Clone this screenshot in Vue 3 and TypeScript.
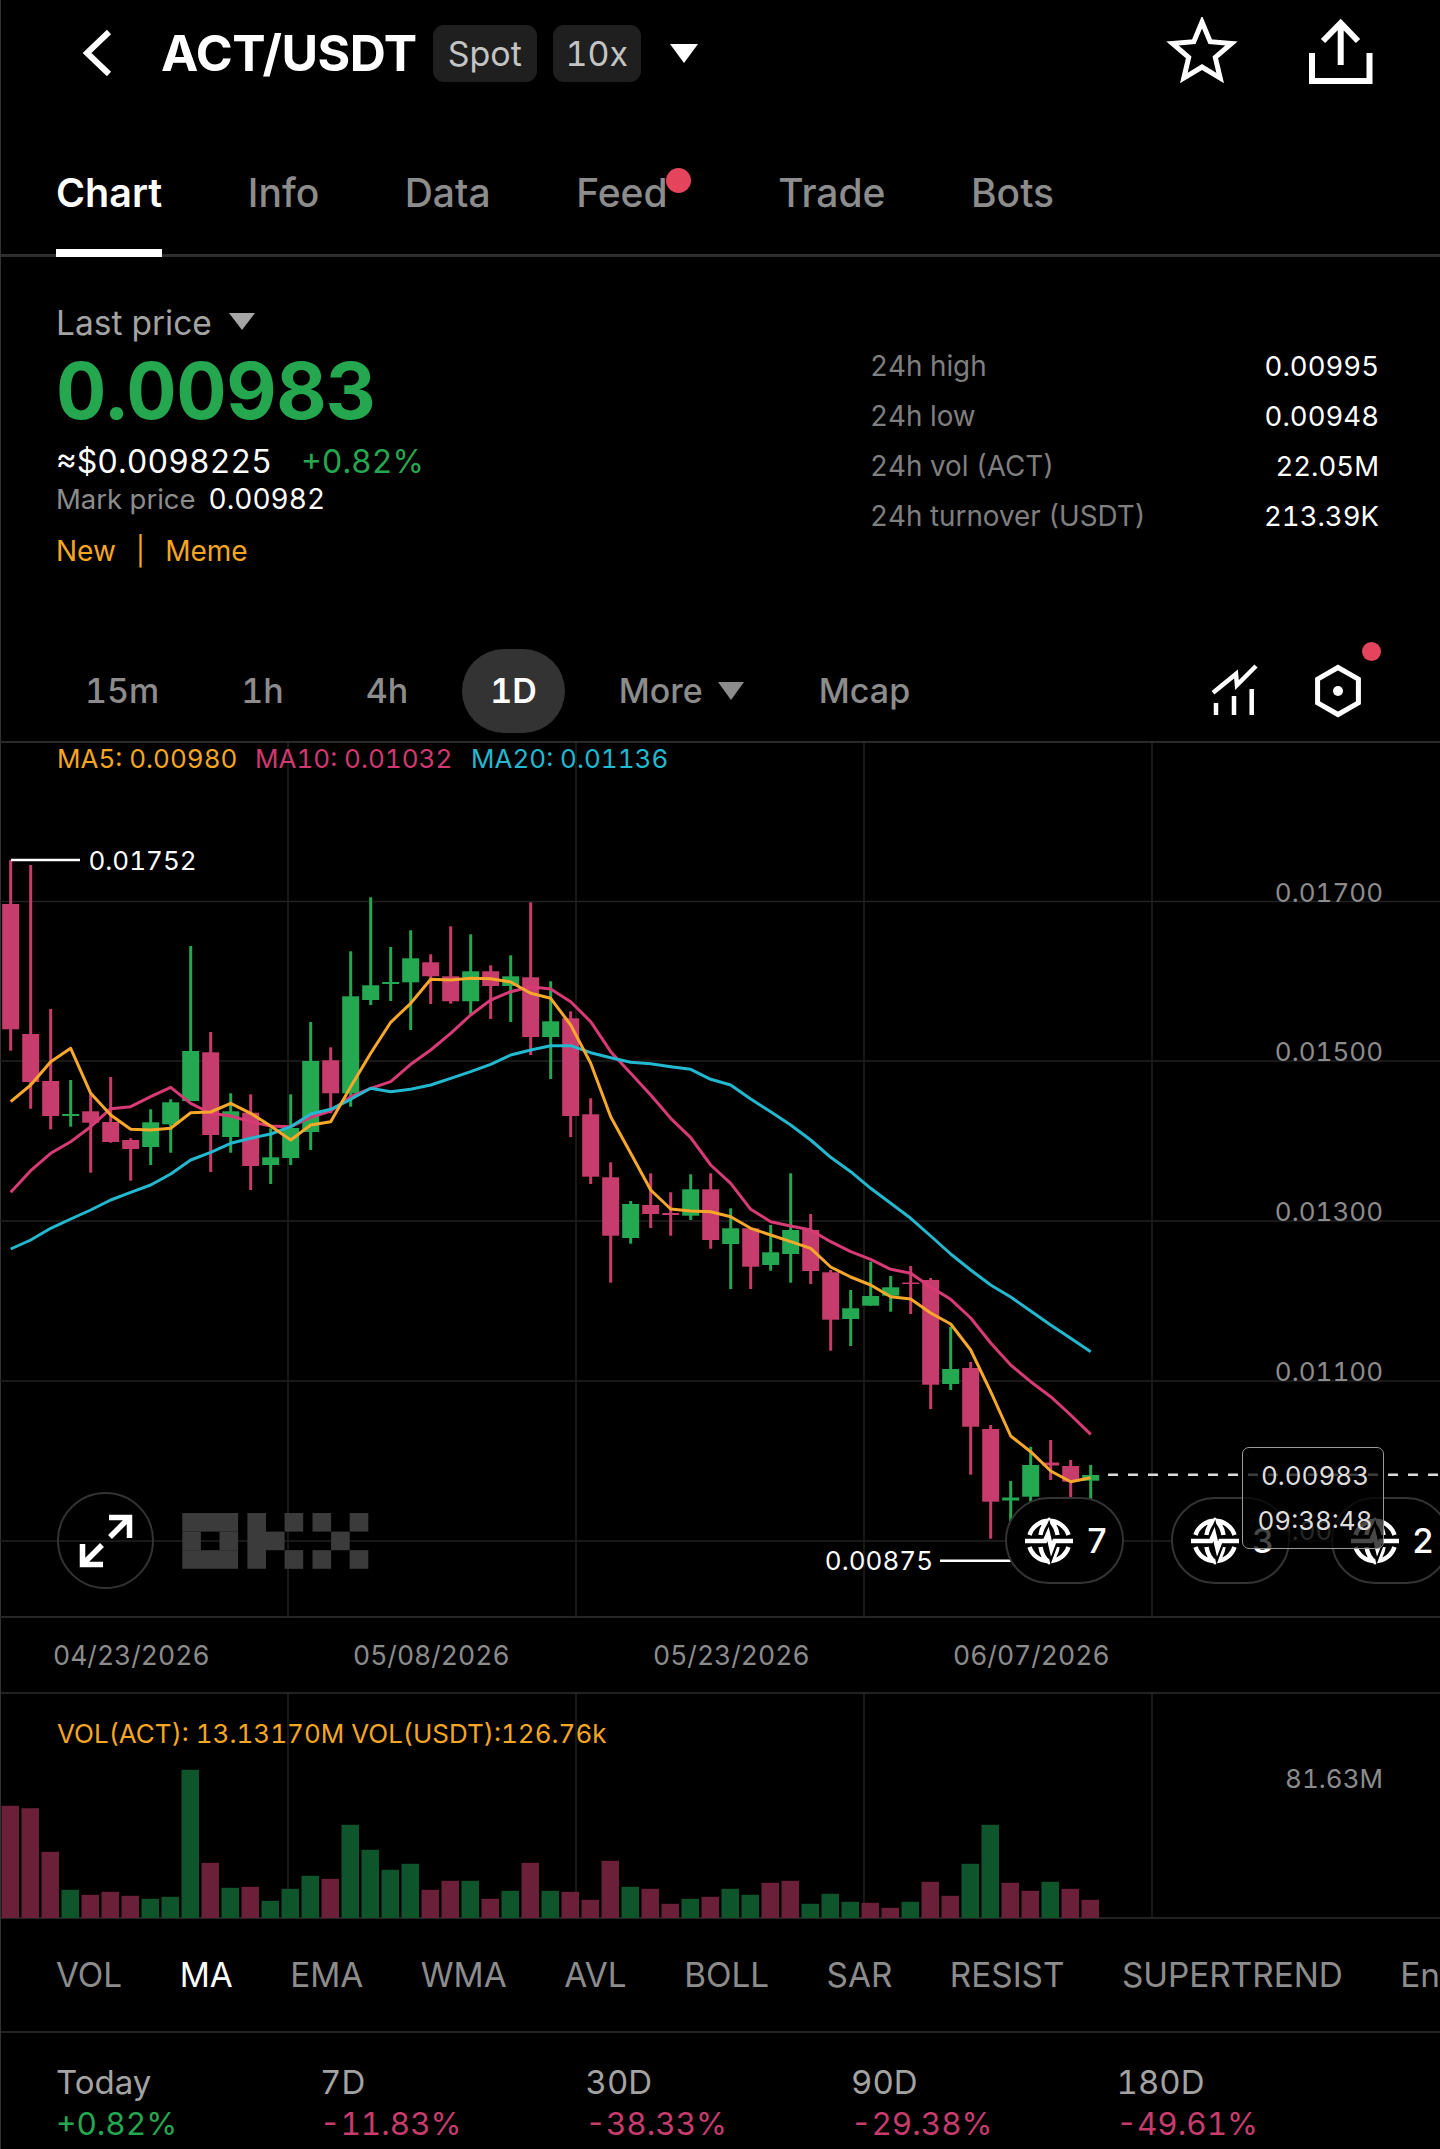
<script setup lang="ts">
type Candle = [top: number, bottom: number, high: number, low: number, up: boolean];

const STEP = 20;
const START = 10.7;
const xAt = (i: number) => START + i * STEP;

const candles: Candle[] = [
  [904, 1029.3, 860, 1050.7, false], [1034, 1082, 865, 1108.7, false], [1081, 1116, 1009, 1129.3, false],
  [1114, 1116, 1080, 1126.7, true], [1111.3, 1122.7, 1093, 1172.7, false], [1122, 1142, 1077, 1142.7, false],
  [1140, 1149, 1138.3, 1180.7, false], [1122.3, 1147, 1109.3, 1165, true], [1102.3, 1124.3, 1099.3, 1152.7, true],
  [1051, 1101, 946, 1101, true], [1052.3, 1135, 1032, 1172, false], [1111.3, 1137, 1093.3, 1152.7, true],
  [1112.7, 1166, 1094.3, 1190, false], [1157.3, 1165, 1128.3, 1184, true], [1128, 1158, 1094.3, 1165, true],
  [1061, 1132, 1022, 1150, true], [1060.3, 1093.3, 1047.3, 1113.3, false], [996.3, 1093.3, 951.3, 1106.7, true],
  [985.3, 1000, 897.3, 1005, true], [982, 984, 947, 1001, true], [958.3, 982.3, 930.3, 1030, true],
  [962.3, 976.3, 954.3, 1004, false], [976.3, 1001.3, 926.3, 1003.7, false], [971.3, 1001.3, 934.3, 1014.3, true],
  [971.3, 986, 965.3, 1019, false], [976.3, 986, 955.3, 1022, true], [977.3, 1037, 902.3, 1055, false],
  [1021.3, 1037, 981.3, 1079, true], [1018.3, 1116, 1011.3, 1137, false], [1114.3, 1176.7, 1098.3, 1184, false],
  [1177.3, 1235.7, 1162.3, 1282.7, false], [1204, 1238, 1201, 1243.7, true], [1205, 1214, 1173.3, 1228, false],
  [1213, 1215, 1192.3, 1235.7, false], [1189.3, 1215.7, 1174.3, 1220, true], [1189.3, 1240, 1173.3, 1248.7, false],
  [1228.3, 1244, 1208.3, 1289, true], [1228.3, 1266.7, 1228.3, 1289, false], [1252.3, 1265, 1225, 1270.7, true],
  [1230, 1254, 1173.3, 1282.7, true], [1230, 1271, 1214, 1284, false], [1272.3, 1319.7, 1270, 1350.7, false],
  [1308.3, 1319, 1290, 1346, true], [1296, 1305.7, 1261.7, 1305.7, true], [1287.3, 1295.7, 1276, 1311.7, true],
  [1282.5, 1284, 1266, 1314, false], [1280, 1384.7, 1278, 1409, false], [1369, 1384, 1327, 1390, true],
  [1368, 1426.7, 1362, 1474.7, false], [1429, 1501.7, 1425, 1538.7, false], [1497.5, 1500.5, 1481, 1530, true],
  [1465, 1496.7, 1446.7, 1510, true], [1462.5, 1465.5, 1440, 1480, false], [1466, 1481.7, 1460, 1510, false],
  [1475, 1480.7, 1465, 1510, true],
];

const ma5 = [
  1101.7, 1085, 1061.7, 1048.3, 1093.3, 1115, 1129.3, 1130, 1128.3, 1112.7, 1112, 1103.3, 1113.3, 1126, 1140,
  1125, 1121.7, 1086.7, 1053.3, 1022.3, 1003.3, 979.3, 980, 978.3, 978.7, 982, 993.3, 998.3, 1025, 1063.3,
  1116.7, 1153.3, 1190, 1209, 1211, 1211.7, 1216.7, 1228.3, 1235, 1241.7, 1248.3, 1267, 1277, 1285, 1296.7,
  1299, 1313, 1324, 1350, 1391.7, 1436, 1451.7, 1471, 1481.7, 1477.7,
];
const ma10 = [
  1192.3, 1170.7, 1153.3, 1141.7, 1126.7, 1108.7, 1106.7, 1096.7, 1087.3, 1103.3, 1113.3, 1116, 1121.7, 1126,
  1126.7, 1117.3, 1111, 1096.7, 1088.3, 1081.7, 1064.3, 1050, 1033.3, 1015, 1000, 991.7, 986.7, 989, 1001.7,
  1021.7, 1051.7, 1073.3, 1095, 1118.3, 1137.7, 1165, 1183.3, 1209.3, 1221.7, 1226, 1230, 1241.7, 1251.7,
  1259.3, 1269.3, 1273.3, 1287, 1299.3, 1318, 1343, 1365, 1381.7, 1396.7, 1415, 1434.3,
];
const ma20 = [
  1249, 1240, 1228.3, 1219, 1210, 1200, 1192.3, 1185, 1174, 1160, 1152.3, 1143.3, 1138.3, 1134, 1126.7, 1114,
  1109.3, 1099.3, 1088.3, 1091.7, 1089.3, 1085, 1078.3, 1071.7, 1064.3, 1055, 1050, 1045.7, 1045.7, 1052.7,
  1057.7, 1062.3, 1063.7, 1066.7, 1069.3, 1079.3, 1085, 1099, 1111.7, 1125, 1140, 1157.3, 1171.7, 1188.3,
  1203.3, 1218.3, 1236, 1254, 1270, 1285, 1297, 1311, 1325, 1338.3, 1351.7,
];

const linePath = (ys: number[]) => ys.map((y, i) => `${i ? 'L' : 'M'}${xAt(i)} ${y}`).join(' ');

const vols = [
  112.7, 110.3, 66.7, 28.7, 23.7, 26.7, 22.7, 19.7, 21.7, 148.7, 55.7, 30.7, 31.7, 17.7, 29.7, 42.7, 39.7, 93.7,
  68.7, 48.7, 54.7, 28.7, 37.7, 37.7, 19.7, 27.7, 55.7, 27.7, 26.7, 18.7, 57.7, 31.7, 29.7, 14.7, 19.7, 21.7,
  29.7, 23.7, 35.7, 37.7, 14.7, 24.7, 16.7, 15.7, 10.7, 16.7, 36.7, 22.7, 54.7, 93.7, 35.7, 27.7, 36.7, 29.7, 18.7,
];
const volColors = 'RRRGRRRGGGRGRGGGRGGGGRRGRGRGRRRGRRGRGGRRGGGRRGRRGGRRG';
const VOL_BASE = 1917.5;

const gridX = [288, 576, 864, 1152];
const gridY = [901.5, 1061, 1221, 1381, 1541];
const axisLabels = [
  { y: 892, text: '0.01700' },
  { y: 1051, text: '0.01500' },
  { y: 1211, text: '0.01300' },
  { y: 1371, text: '0.01100' },
  { y: 1530, text: '0.00900' },
];

const tabs = ['Chart', 'Info', 'Data', 'Feed', 'Trade', 'Bots'];
const stats = [
  ['24h high', '0.00995'],
  ['24h low', '0.00948'],
  ['24h vol (ACT)', '22.05M'],
  ['24h turnover (USDT)', '213.39K'],
];
const dates = ['04/23/2026', '05/08/2026', '05/23/2026', '06/07/2026'];
const indicators = ['VOL', 'MA', 'EMA', 'WMA', 'AVL', 'BOLL', 'SAR', 'RESIST', 'SUPERTREND', 'Entry'];
const returns = [
  { label: 'Today', value: '+0.82%', up: true },
  { label: '7D', value: '-11.83%', up: false },
  { label: '30D', value: '-38.33%', up: false },
  { label: '90D', value: '-29.38%', up: false },
  { label: '180D', value: '-49.61%', up: false },
];
const signals = [
  { left: 1005, width: 119, count: 7 },
  { left: 1171, width: 119, count: 3 },
  { left: 1331, width: 119, count: 2 },
];

// logo blocks, one unit is 18.6px
const logoBlocks = [
  [0, 0, 3, 1], [0, 2, 3, 1], [0, 1, 1, 1], [2, 1, 1, 1],
  [3.5, 0, 1, 3], [4.5, 1, 1, 1], [5.5, 0, 1, 1], [5.5, 2, 1, 1],
  [7, 0, 1, 1], [7, 2, 1, 1], [8, 1, 1, 1], [9, 0, 1, 1], [9, 2, 1, 1],
];
</script>

<template>
  <div class="page">
    <header class="topbar">
      <svg class="back" width="34" height="50" viewBox="0 0 34 50">
        <path d="M27 4 L5 25 L27 46" />
      </svg>
      <span class="pair">ACT/USDT</span>
      <span class="chip">Spot</span>
      <span class="chip chip-lev">10x</span>
      <span class="caret caret-white"></span>
      <svg class="star" width="72" height="72" viewBox="-36 -36 72 72">
        <path d="M0 -31 L8.2 -11.3 L29.5 -9.6 L13.3 4.3 L18.2 25.1 L0 14 L-18.2 25.1 L-13.3 4.3 L-29.5 -9.6 L-8.2 -11.3 Z" />
      </svg>
      <svg class="share" width="70" height="70" viewBox="0 0 70 70">
        <path d="M6 35 V63 H63.5 V35" />
        <path d="M34.7 47 V5 M17 23 L34.7 5 L52 23" />
      </svg>
    </header>

    <nav class="tabs">
      <div v-for="tab in tabs" :key="tab" :class="['tab', { active: tab === 'Chart', feed: tab === 'Feed' }]">
        {{ tab }}
        <i v-if="tab === 'Feed'" class="dot feed-dot"></i>
      </div>
    </nav>

    <section class="stats">
      <div class="quote">
        <div class="last-label">Last price <span class="caret caret-gray"></span></div>
        <div class="last-price">0.00983</div>
        <div class="usd-line"><span>≈$0.0098225</span><span class="green">+0.82%</span></div>
        <div class="mark-line"><span class="mark-label">Mark price</span><span>0.00982</span></div>
        <div class="tags"><span>New</span><span>|</span><span>Meme</span></div>
      </div>
      <dl class="day-stats">
        <div v-for="row in stats" :key="row[0]" class="stat-row">
          <dt>{{ row[0] }}</dt>
          <dd>{{ row[1] }}</dd>
        </div>
      </dl>
    </section>

    <div class="timeframes">
      <span class="tf">15m</span>
      <span class="tf">1h</span>
      <span class="tf">4h</span>
      <span class="tf tf-active">1D</span>
      <span class="tf tf-more">More <span class="caret caret-gray-sm"></span></span>
      <span class="tf">Mcap</span>
      <svg class="tool-icon" width="50" height="54" viewBox="0 0 50 54">
        <path d="M4 28.7 L27 10 L28 21 L47 2" />
        <path d="M7 51 V39 M25 51 V32 M42.7 51 V25" />
      </svg>
      <div class="hex-wrap">
        <svg width="52" height="56" viewBox="0 0 52 56">
          <path d="M26 4.5 L46.4 16.2 V39.8 L26 51.5 L5.6 39.8 V16.2 Z" />
          <circle cx="26" cy="28" r="5" />
        </svg>
        <i class="dot hex-dot"></i>
      </div>
    </div>

    <section class="chart">
      <svg class="chart-svg" width="1440" height="874" viewBox="0 743 1440 874">
        <g class="grid">
          <line v-for="x in gridX" :key="x" :x1="x" :x2="x" y1="743" y2="1617" />
          <line v-for="y in gridY" :key="y" x1="0" x2="1440" :y1="y" :y2="y" />
        </g>

        <g class="logo" transform="translate(182.3 1513)">
          <rect v-for="(b, i) in logoBlocks" :key="i" :x="b[0] * 18.6" :y="b[1] * 18.6" :width="b[2] * 18.6" :height="b[3] * 18.6" />
        </g>

        <text class="legend orange" x="57" y="768">MA5: 0.00980</text>
        <text class="legend pink" x="255" y="768">MA10: 0.01032</text>
        <text class="legend cyan" x="471" y="768">MA20: 0.01136</text>

        <text v-for="label in axisLabels" :key="label.y" class="axis" x="1383" :y="label.y + 10">{{ label.text }}</text>

        <g v-for="(c, i) in candles" :key="i" :class="c[4] ? 'up' : 'down'">
          <rect :x="xAt(i) - 1.5" :y="c[2]" width="3" :height="c[3] - c[2]" />
          <rect :x="xAt(i) - 8.5" :y="c[0]" width="17" :height="c[1] - c[0]" />
        </g>

        <path class="ma ma-pink" :d="linePath(ma10)" />
        <path class="ma ma-cyan" :d="linePath(ma20)" />
        <path class="ma ma-orange" :d="linePath(ma5)" />

        <path class="marker" d="M11 860 H80" />
        <text class="marker-text" x="88.5" y="869.5">0.01752</text>
        <path class="marker" d="M940 1560.7 H1012" />
        <text class="marker-text end" x="933" y="1570">0.00875</text>

        <line class="price-line" x1="1108" x2="1440" y1="1474.7" y2="1474.7" />
      </svg>

      <button class="expand">
        <svg width="60" height="60" viewBox="0 0 60 60">
          <path d="M33 6.5 H53.5 V27 M53 7 L34 26" />
          <path d="M27 53.5 H6.5 V33 M7 53 L26 34" />
        </svg>
      </button>

      <div v-for="s in signals" :key="s.left" class="signal" :style="{ left: s.left + 'px', width: s.width + 'px' }">
        <svg width="52" height="52" viewBox="-26 -26 52 52">
          <path d="M-19.5 -6 A20.5 20.5 0 0 1 19.5 -6 M-8.5 -6 Q-7 -16 0 -21 Q7 -16 8.5 -6" />
          <path d="M-19.5 6 A20.5 20.5 0 0 0 19.5 6 M-8.5 6 Q-7 16 0 21 Q7 16 8.5 6" />
          <path class="pulse-halo" d="M-7 0 H-4 L-1 -7 L2.5 8 L5.5 0 H8" />
          <path d="M-24 0 H-4 L-1 -7 L2.5 8 L5.5 0 H24" />
        </svg>
        <span>{{ s.count }}</span>
      </div>

      <div class="price-tip">
        <span>0.00983</span>
        <span>09:38:48</span>
      </div>
    </section>

    <div class="dates">
      <span v-for="d in dates" :key="d">{{ d }}</span>
    </div>

    <section class="volume">
      <svg width="1440" height="224" viewBox="0 1693 1440 224">
        <g class="grid">
          <line v-for="x in gridX" :key="x" :x1="x" :x2="x" y1="1693" y2="1917" />
        </g>
        <text class="legend orange" x="57" y="1741.5">VOL(ACT): 13.13170M VOL(USDT):126.76k</text>
        <text class="axis" x="1383" y="1787">81.63M</text>
        <rect
          v-for="(h, i) in vols"
          :key="i"
          :class="volColors[i] === 'G' ? 'vol-up' : 'vol-down'"
          :x="xAt(i) - 9.2"
          :y="VOL_BASE - h"
          width="17.5"
          :height="h"
        />
      </svg>
    </section>

    <div class="indicators">
      <span v-for="name in indicators" :key="name" :class="{ on: name === 'MA' }">{{ name }}</span>
    </div>

    <div class="returns">
      <div v-for="r in returns" :key="r.label" class="return-col">
        <span class="return-label">{{ r.label }}</span>
        <span :class="['return-value', r.up ? 'green' : 'red']">{{ r.value }}</span>
      </div>
    </div>
  </div>
</template>

<style>
html,
body {
  margin: 0;
  background: #000;
}
</style>

<style scoped>
.page {
  position: relative;
  width: 1440px;
  height: 2149px;
  overflow: hidden;
  background: #000;
  color: #fff;
  font-family: Inter, "Noto Sans", sans-serif;
  font-variant-numeric: tabular-nums;
}
.page::before {
  content: '';
  position: absolute;
  left: 0;
  top: 0;
  bottom: 0;
  width: 1px;
  background: #333;
}

.green {
  color: #25a750;
}
.red {
  color: #c63c6c;
}

.caret {
  display: inline-block;
  width: 0;
  height: 0;
  border-style: solid;
  border-color: transparent;
  border-bottom-width: 0;
}
.caret-white {
  margin-left: 29px;
  border-width: 19px 14px 0;
  border-top-color: #fff;
}
.caret-gray {
  margin-left: 8px;
  vertical-align: 5px;
  border-width: 17px 13px 0;
  border-top-color: #a6a6a6;
}
.caret-gray-sm {
  border-width: 18px 13.5px 0;
  border-top-color: #8c8c8c;
}

.dot {
  position: absolute;
  display: block;
  border-radius: 50%;
  background: #e5455c;
}

/* top bar */
.topbar {
  display: flex;
  align-items: center;
  height: 106px;
  padding-left: 82px;
  box-sizing: border-box;
}
.back path,
.star path,
.share path,
.tool-icon path,
.hex-wrap path,
.signal path,
.expand path {
  fill: none;
  stroke: #fff;
}
.back path {
  stroke-width: 6;
}
.pair {
  margin-left: 45px;
  font-size: 50px;
  font-weight: 700;
  letter-spacing: -0.5px;
}
.chip {
  display: flex;
  align-items: center;
  justify-content: center;
  height: 57px;
  width: 104px;
  margin-left: 16px;
  border-radius: 11px;
  background: #1f1f1f;
  color: #c4c4c4;
  font-size: 34px;
}
.chip-lev {
  width: 88px;
}
.star {
  margin-left: auto;
}
.star path {
  stroke-width: 5;
}
.share {
  margin-left: 68px;
  margin-right: 64px;
}
.share path {
  stroke-width: 6;
}

/* tabs */
.tabs {
  display: flex;
  gap: 85.5px;
  height: 151px;
  padding: 63px 0 0 56px;
  box-sizing: border-box;
  border-bottom: 3px solid #2e2e2e;
}
.tab {
  position: relative;
  height: 85px;
  color: #8c8c8c;
  font-size: 39px;
  font-weight: 500;
  line-height: 48px;
}
.tab.active {
  color: #fff;
  font-size: 39.5px;
  font-weight: 600;
}
.tab.active::after {
  content: '';
  position: absolute;
  left: 0;
  right: 0;
  bottom: -3px;
  height: 8px;
  background: #fff;
}
.tab.feed {
  margin-right: 25px;
}
.feed-dot {
  left: 90px;
  top: -1px;
  width: 25px;
  height: 25px;
}

/* price block */
.stats {
  display: flex;
  justify-content: space-between;
  height: 383px;
  box-sizing: border-box;
}
.quote {
  padding: 46px 0 0 56px;
}
.last-label {
  color: #a3a3a3;
  font-size: 33.5px;
  line-height: 40px;
}
.last-price {
  margin-top: 10px;
  color: #25a750;
  font-size: 78px;
  font-weight: 700;
  line-height: 76px;
  letter-spacing: -0.5px;
}
.usd-line {
  display: flex;
  gap: 29px;
  margin-top: 13px;
  font-size: 32px;
  line-height: 40px;
}
.mark-line {
  display: flex;
  gap: 13px;
  margin-top: 0;
  font-size: 28px;
  line-height: 34px;
}
.mark-label {
  color: #8c8c8c;
  font-size: 27.5px;
}
.tags {
  display: flex;
  gap: 20px;
  margin-top: 17px;
  color: #f5a623;
  font-size: 28px;
  line-height: 36px;
}
.day-stats {
  width: 509px;
  margin: 0 61px 0 0;
  padding-top: 84px;
}
.stat-row {
  display: flex;
  justify-content: space-between;
  font-size: 27.8px;
  line-height: 50px;
}
.stat-row dt {
  color: #7f7f7f;
}
.stat-row dd {
  margin: 0;
  font-size: 27.5px;
}

/* timeframes */
.timeframes {
  display: flex;
  align-items: center;
  gap: 26px;
  height: 103px;
  padding: 9px 0 9px 57px;
  box-sizing: border-box;
  border-bottom: 2px solid #2a2a2a;
  position: relative;
}
.tf {
  display: flex;
  align-items: center;
  height: 84px;
  padding: 0 28px;
  border-radius: 42px;
  color: #8c8c8c;
  font-size: 34px;
  font-weight: 500;
}
.tf-active {
  background: #333;
  color: #fff;
  font-weight: 600;
}
.tf-more {
  padding-right: 21px;
}
.tf-more .caret {
  margin-left: 15px;
}
.tool-icon {
  margin-left: auto;
}
.tool-icon path {
  stroke-width: 4.5;
}
.hex-wrap {
  position: relative;
  display: flex;
  margin: 0 76px 0 27px;
}
.hex-wrap path {
  stroke-width: 5;
}
.hex-wrap circle {
  fill: #fff;
}
.hex-dot {
  left: 50px;
  top: -21px;
  width: 19px;
  height: 19px;
}

/* candle chart */
.chart {
  position: relative;
  height: 875px;
  border-bottom: 2px solid #262626;
  box-sizing: border-box;
}
.chart-svg {
  display: block;
}
.grid line {
  stroke: #212121;
  stroke-width: 1.5;
}
.logo rect {
  fill: #3b3b3b;
}
.legend {
  font-size: 26px;
}
.orange {
  fill: #f5a623;
}
.pink {
  fill: #d0396f;
}
.cyan {
  fill: #22b8d0;
}
.axis {
  fill: #8c8c8c;
  font-size: 26px;
  text-anchor: end;
}
.up rect {
  fill: #24a851;
}
.down rect {
  fill: #c63c6c;
}
.ma {
  fill: none;
  stroke-width: 3;
  stroke-linejoin: round;
}
.ma-orange {
  stroke: #f7a82a;
}
.ma-pink {
  stroke: #d83a76;
}
.ma-cyan {
  stroke: #22b8d0;
}
.marker {
  fill: none;
  stroke: #fff;
  stroke-width: 2.5;
}
.marker-text {
  fill: #fff;
  font-size: 26px;
}
.marker-text.end {
  text-anchor: end;
}
.price-line {
  stroke: #ddd;
  stroke-width: 2.5;
  stroke-dasharray: 10 10;
}
.expand {
  position: absolute;
  left: 57px;
  top: 749px;
  display: flex;
  align-items: center;
  justify-content: center;
  width: 97px;
  height: 97px;
  padding: 0;
  border: 2px solid #333;
  border-radius: 50%;
  background: transparent;
  box-sizing: border-box;
}
.expand path {
  stroke-width: 5.5;
}
.signal {
  position: absolute;
  top: 754px;
  display: flex;
  align-items: center;
  gap: 11px;
  height: 87px;
  padding-left: 16px;
  border: 2px solid #333;
  border-radius: 44px;
  background: #000;
  box-sizing: border-box;
  font-size: 34px;
  font-weight: 500;
}
.signal path {
  stroke-width: 4.5;
}
.signal .pulse-halo {
  stroke: #000;
  stroke-width: 9;
}
.price-tip {
  position: absolute;
  left: 1242px;
  top: 704px;
  display: flex;
  flex-direction: column;
  align-items: center;
  justify-content: space-between;
  width: 142px;
  height: 102px;
  padding: 12px 0 11px 4px;
  border: 1.5px solid #9a9a9a;
  border-radius: 7px;
  background: rgba(0, 0, 0, 0.72);
  box-sizing: border-box;
  color: #ddd;
  font-size: 26px;
  line-height: 32px;
}

/* date axis */
.dates {
  display: grid;
  grid-template-columns: repeat(4, 300px);
  align-items: center;
  height: 76px;
  padding-left: 53px;
  border-bottom: 2px solid #222;
  box-sizing: border-box;
  color: #8c8c8c;
  font-size: 26.5px;
}

/* volume */
.volume {
  height: 225px;
  border-bottom: 2px solid #222;
  box-sizing: border-box;
}
.volume svg {
  display: block;
}
.vol-up {
  fill: #0f552c;
}
.vol-down {
  fill: #692038;
}

/* indicators */
.indicators {
  display: flex;
  align-items: center;
  gap: 57.5px;
  height: 114px;
  padding-left: 56px;
  border-bottom: 2px solid #222;
  box-sizing: border-box;
  color: #8c8c8c;
  font-size: 33.3px;
  white-space: nowrap;
  overflow: hidden;
}
.indicators .on {
  color: #fff;
}

/* returns */
.returns {
  display: grid;
  grid-template-columns: 264px repeat(4, 265.5px);
  padding: 28px 0 0 56px;
}
.return-col {
  display: flex;
  flex-direction: column;
  font-size: 33px;
  line-height: 42px;
}
.return-label {
  color: #a3a3a3;
}
.return-value {
  font-size: 31.5px;
}
</style>
